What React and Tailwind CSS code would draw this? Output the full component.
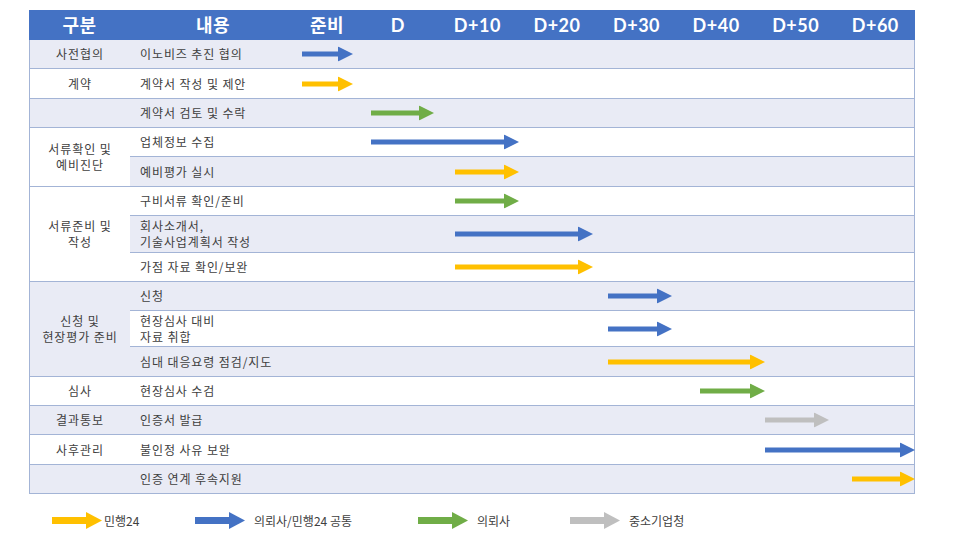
import React from "react";

const COLORS = {
  blue: "#4472c4",
  yellow: "#ffc000",
  green: "#70ad47",
  gray: "#bfbfbf",
};

function Arrow({ color, width, shaft = 5, head = 15, len = 15 }) {
  const c = COLORS[color];
  const mid = head / 2;
  return (
    <svg width={width} height={head} viewBox={`0 0 ${width} ${head}`} className="block">
      <rect x="0" y={mid - shaft / 2} width={width - len + 1} height={shaft} fill={c} />
      <polygon points={`${width - len},0 ${width},${mid} ${width - len},${head}`} fill={c} />
    </svg>
  );
}

const L = "bg-[#e9ebf5]";
const W = "bg-white";

const groups = [
  { label: ["사전협의"], bg: L, rows: [{ t: ["이노비즈 추진 협의"], h: "h-[29px]", bg: L, a: ["blue", 302, 353] }] },
  { label: ["계약"], bg: W, rows: [{ t: ["계약서 작성 및 제안"], h: "h-[30px]", bg: W, a: ["yellow", 302, 353] }] },
  { label: [], bg: L, rows: [{ t: ["계약서 검토 및 수락"], h: "h-[29px]", bg: L, a: ["green", 371, 434] }] },
  {
    label: ["서류확인 및", "예비진단"],
    bg: W,
    rows: [
      { t: ["업체정보 수집"], h: "h-[29px]", bg: W, a: ["blue", 371, 519] },
      { t: ["예비평가 실시"], h: "h-[30px]", bg: L, a: ["yellow", 455, 519] },
    ],
  },
  {
    label: ["서류준비 및", "작성"],
    bg: W,
    rows: [
      { t: ["구비서류 확인/준비"], h: "h-[29px]", bg: W, a: ["green", 455, 519] },
      { t: ["회사소개서,", "기술사업계획서 작성"], h: "h-[37px]", bg: L, a: ["blue", 455, 593] },
      { t: ["가점 자료 확인/보완"], h: "h-[29px]", bg: W, a: ["yellow", 455, 593] },
    ],
  },
  {
    label: ["신청 및", "현장평가 준비"],
    bg: L,
    rows: [
      { t: ["신청"], h: "h-[29px]", bg: L, a: ["blue", 608, 672] },
      { t: ["현장심사 대비", "자료 취합"], h: "h-[36px]", bg: W, a: ["blue", 608, 672] },
      { t: ["심대 대응요령 점검/지도"], h: "h-[30px]", bg: L, a: ["yellow", 608, 765] },
    ],
  },
  { label: ["심사"], bg: W, rows: [{ t: ["현장심사 수검"], h: "h-[29px]", bg: W, a: ["green", 700, 765] }] },
  { label: ["결과통보"], bg: L, rows: [{ t: ["인증서 발급"], h: "h-[29px]", bg: L, a: ["gray", 765, 829] }] },
  { label: ["사후관리"], bg: W, rows: [{ t: ["불인정 사유 보완"], h: "h-[30px]", bg: W, a: ["blue", 765, 915] }] },
  { label: [], bg: L, rows: [{ t: ["인증 연계 후속지원"], h: "h-[29px]", bg: L, a: ["yellow", 852, 915] }] },
];

const headCols = [
  { t: "구분", w: "w-[101px]" },
  { t: "내용", w: "w-[166px]" },
  { t: "준비", w: "w-[62px]" },
  { t: "D", w: "flex-1" },
  { t: "D+10", w: "flex-1" },
  { t: "D+20", w: "flex-1" },
  { t: "D+30", w: "flex-1" },
  { t: "D+40", w: "flex-1" },
  { t: "D+50", w: "flex-1" },
  { t: "D+60", w: "flex-1" },
];

const legend = [
  { c: "yellow", t: "민행24", w: "w-[143px]", gap: "ml-[2px]" },
  { c: "blue", t: "의뢰사/민행24 공통", w: "w-[223px]", gap: "ml-[9px]" },
  { c: "green", t: "의뢰사", w: "w-[152px]", gap: "ml-[9px]" },
  { c: "gray", t: "중소기업청", w: "w-[160px]", gap: "ml-[9px]" },
];

export default function App() {
  return (
    <div className="w-[966px] h-[543px] bg-white pt-[10px] font-['Noto_Sans_CJK_KR',sans-serif] text-[#404040]">
      <div className="ml-[29px] w-[886px]">
        {/* Header */}
        <div className="flex h-[30px] bg-[#4472c4] text-white font-['Lato','Noto_Sans_CJK_KR',sans-serif] font-bold text-[18px] tracking-[0.5px]">
          {headCols.map((c) => (
            <div key={c.t} className={`${c.w} flex items-center justify-center leading-none`}>
              {c.t}
            </div>
          ))}
        </div>
        {/* Body */}
        <div className="border-x border-[#a3b4d6] text-[12px] tracking-[0.9px]">
          {groups.map((g, gi) => (
            <div key={gi} className="flex">
              <div
                className={`w-[100px] ${g.bg} border-b border-[#a3b4d6] flex flex-col items-center justify-center leading-[16px] text-center`}
              >
                {g.label.map((l) => (
                  <div key={l}>{l}</div>
                ))}
              </div>
              <div className="flex-1 flex flex-col">
                {g.rows.map((r, ri) => (
                  <div key={ri} className={`relative flex ${r.h} ${r.bg} border-b border-[#a3b4d6]`}>
                    <div className="w-[166px] pl-[10px] flex flex-col justify-center leading-[16px]">
                      {r.t.map((l) => (
                        <div key={l}>{l}</div>
                      ))}
                    </div>
                    <div
                      className="absolute top-1/2 -translate-y-1/2"
                      style={{ left: r.a[1] - 130 }}
                    >
                      <Arrow color={r.a[0]} width={r.a[2] - r.a[1]} />
                    </div>
                  </div>
                ))}
              </div>
            </div>
          ))}
        </div>
      </div>
      {/* Legend */}
      <div className="flex items-center mt-[18px] pl-[52px] text-[12px]">
        {legend.map((l) => (
          <div key={l.t} className={`${l.w} flex items-center`}>
            <Arrow color={l.c} width={50} shaft={7} head={17} len={16} />
            <span className={`${l.gap} leading-none`}>{l.t}</span>
          </div>
        ))}
      </div>
    </div>
  );
}
